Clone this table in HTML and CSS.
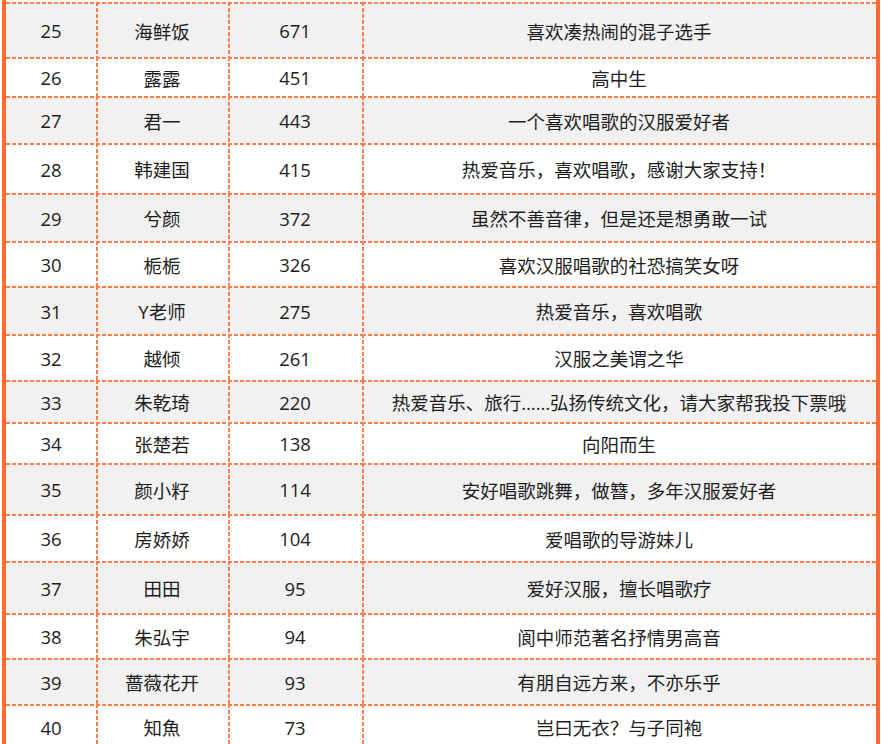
FILE: index.html
```html
<!DOCTYPE html>
<html lang="zh">
<head>
<meta charset="utf-8">
<link rel="stylesheet" href="styles.css">
</head>
<body>
<div class="frame">
<table class="rank">
<colgroup><col class="c1"><col class="c2"><col class="c3"><col class="c4"></colgroup>
<tbody>
<tr class="odd"><td>25</td><td>海鲜饭</td><td>671</td><td>喜欢凑热闹的混子选手</td></tr>
<tr><td>26</td><td>露露</td><td>451</td><td>高中生</td></tr>
<tr class="odd"><td>27</td><td>君一</td><td>443</td><td>一个喜欢唱歌的汉服爱好者</td></tr>
<tr><td>28</td><td>韩建国</td><td>415</td><td>热爱音乐，喜欢唱歌，感谢大家支持！</td></tr>
<tr class="odd"><td>29</td><td>兮颜</td><td>372</td><td>虽然不善音律，但是还是想勇敢一试</td></tr>
<tr><td>30</td><td>栀栀</td><td>326</td><td>喜欢汉服唱歌的社恐搞笑女呀</td></tr>
<tr class="odd"><td>31</td><td>Y老师</td><td>275</td><td>热爱音乐，喜欢唱歌</td></tr>
<tr><td>32</td><td>越倾</td><td>261</td><td>汉服之美谓之华</td></tr>
<tr class="odd"><td>33</td><td>朱乾琦</td><td>220</td><td>热爱音乐、旅行……弘扬传统文化，请大家帮我投下票哦</td></tr>
<tr><td>34</td><td>张楚若</td><td>138</td><td>向阳而生</td></tr>
<tr class="odd"><td>35</td><td>颜小籽</td><td>114</td><td>安好唱歌跳舞，做簪，多年汉服爱好者</td></tr>
<tr><td>36</td><td>房娇娇</td><td>104</td><td>爱唱歌的导游妹儿</td></tr>
<tr class="odd"><td>37</td><td>田田</td><td>95</td><td>爱好汉服，擅长唱歌疗</td></tr>
<tr><td>38</td><td>朱弘宇</td><td>94</td><td>阆中师范著名抒情男高音</td></tr>
<tr class="odd"><td>39</td><td>蔷薇花开</td><td>93</td><td>有朋自远方来，不亦乐乎</td></tr>
<tr><td>40</td><td>知魚</td><td>73</td><td>岂曰无衣？与子同袍</td></tr>
</tbody>
</table>
</div>
</body>
</html>
```
FILE: styles.css
```css
html, body {
  margin: 0;
  padding: 0;
  background: #ffffff;
}
.frame {
  margin: 0 1px 0 2px;
  padding-top: 2px;
  border-left: 4px solid #ff6a33;
  border-right: 4px solid #ff6a33;
  height: 744px;
  box-sizing: border-box;
  overflow: hidden;
}
.rank {
  width: 100%;
  border-collapse: separate;
  border-spacing: 0;
  table-layout: fixed;
  font-family: "Open Sans", "Noto Sans CJK SC", sans-serif;
  font-size: 18.5px;
  color: #1e1e1e;
}
.c1 { width: 90px; }
.c2 { width: 132px; }
.c3 { width: 134px; }
.rank td {
  padding: 2px 0 0 0;
  text-align: center;
  vertical-align: middle;
  white-space: nowrap;
  background-color: #ffffff;
  background-image:
    linear-gradient(to right, #ff7b4a 4px, transparent 4px),
    linear-gradient(to bottom, #ff7b4a 4px, transparent 4px);
  background-size: 6px 2px, 2px 6px;
  background-repeat: repeat-x, repeat-y;
  background-position: left top, left top;
}
.rank td:first-child {
  background-image: linear-gradient(to right, #ff7b4a 4px, transparent 4px);
  background-size: 6px 2px;
  background-repeat: repeat-x;
  background-position: left top;
}
.rank tr.odd td { background-color: #f1f1f1; }
.rank tr:nth-child(1) { height: 55px; }
.rank tr:nth-child(2) { height: 39px; }
.rank tr:nth-child(3) { height: 47px; }
.rank tr:nth-child(4) { height: 50px; }
.rank tr:nth-child(5) { height: 48px; }
.rank tr:nth-child(6) { height: 45px; }
.rank tr:nth-child(7) { height: 48px; }
.rank tr:nth-child(8) { height: 46px; }
.rank tr:nth-child(9) { height: 42px; }
.rank tr:nth-child(10) { height: 41px; }
.rank tr:nth-child(11) { height: 51px; }
.rank tr:nth-child(12) { height: 47px; }
.rank tr:nth-child(13) { height: 52px; }
.rank tr:nth-child(14) { height: 45px; }
.rank tr:nth-child(15) { height: 46px; }
.rank tr:nth-child(16) { height: 44px; }
```
